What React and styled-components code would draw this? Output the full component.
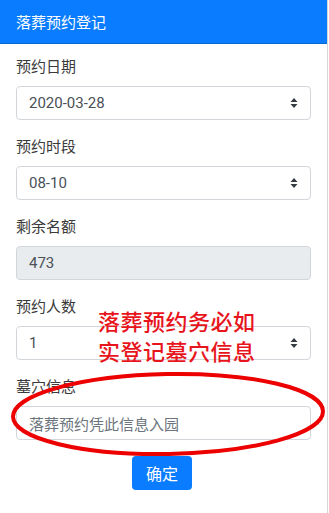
import React from 'react';
import styled, { createGlobalStyle } from 'styled-components';

const GlobalStyle = createGlobalStyle`
  html, body {
    margin: 0;
    padding: 0;
    background: #fff;
  }
  body {
    font-family: Roboto, "Noto Sans CJK SC", sans-serif;
    color: #333;
  }
`;

const Page = styled.div`
  position: relative;
  width: 328px;
  height: 513px;
  box-sizing: border-box;
  border-right: 1px solid #d6d6d6;
  overflow: hidden;
`;

const Header = styled.header`
  height: 44px;
  box-sizing: border-box;
  background-color: #0a7cff;
  border-bottom: 1px solid #0868d6;
  color: #fff;
  display: flex;
  align-items: center;
  padding: 0 16px;
  font-size: 15px;
`;

const Form = styled.form`
  padding: 12px 16px 0;
  display: flex;
  flex-direction: column;
`;

const Group = styled.div`
  margin-bottom: 16px;
`;

const Label = styled.label`
  display: block;
  font-size: 15px;
  line-height: 22px;
  margin-bottom: 8px;
  color: #3a3a3a;
`;

const Field = styled.div`
  height: 34px;
  box-sizing: border-box;
  border: 1px solid #d2d6da;
  border-radius: 4px;
  background: ${p => (p.disabled ? '#e9ecef' : '#fff')};
  display: flex;
  align-items: center;
  justify-content: space-between;
  padding: 0 12px;
  font-size: 15px;
  color: ${p => (p.placeholder ? '#6c757d' : '#495057')};
`;

const Arrows = () => (
  <svg width="8" height="12" viewBox="0 0 8 12">
    <path d="M4 1L7.5 5H0.5z" fill="#343a40" />
    <path d="M4 11L7.5 7H0.5z" fill="#343a40" />
  </svg>
);

const Select = ({ value }) => (
  <Field>
    <span>{value}</span>
    <Arrows />
  </Field>
);

const ButtonRow = styled.div`
  display: flex;
  justify-content: center;
  padding-right: 3px;
`;

const Button = styled.button`
  width: 60px;
  height: 34px;
  border: none;
  border-radius: 4px;
  background: #0a7cff;
  color: #fff;
  font-family: inherit;
  font-size: 16px;
  padding: 0;
`;

const Note = styled.div`
  position: absolute;
  left: 98px;
  top: 308px;
  color: #e8141c;
  font-size: 22px;
  line-height: 30px;
  font-weight: 500;
  letter-spacing: 0.5px;
`;

const Ring = styled.svg`
  position: absolute;
  left: 0;
  top: 360px;
  pointer-events: none;
`;

export default function App() {
  return (
    <Page>
      <GlobalStyle />
      <Header>落葬预约登记</Header>
      <Form>
        <Group>
          <Label>预约日期</Label>
          <Select value="2020-03-28" />
        </Group>
        <Group>
          <Label>预约时段</Label>
          <Select value="08-10" />
        </Group>
        <Group>
          <Label>剩余名额</Label>
          <Field disabled>473</Field>
        </Group>
        <Group>
          <Label>预约人数</Label>
          <Select value="1" />
        </Group>
        <Group>
          <Label>墓穴信息</Label>
          <Field placeholder="true">落葬预约凭此信息入园</Field>
        </Group>
        <ButtonRow>
          <Button type="button">确定</Button>
        </ButtonRow>
      </Form>
      <Note>
        落葬预约务必如<br />实登记墓穴信息
      </Note>
      <Ring width="329" height="110" viewBox="0 0 329 110">
        <ellipse cx="168" cy="54" rx="155" ry="40" fill="none" stroke="#ec0000" strokeWidth="4" transform="rotate(-1 168 54)" />
      </Ring>
    </Page>
  );
}
